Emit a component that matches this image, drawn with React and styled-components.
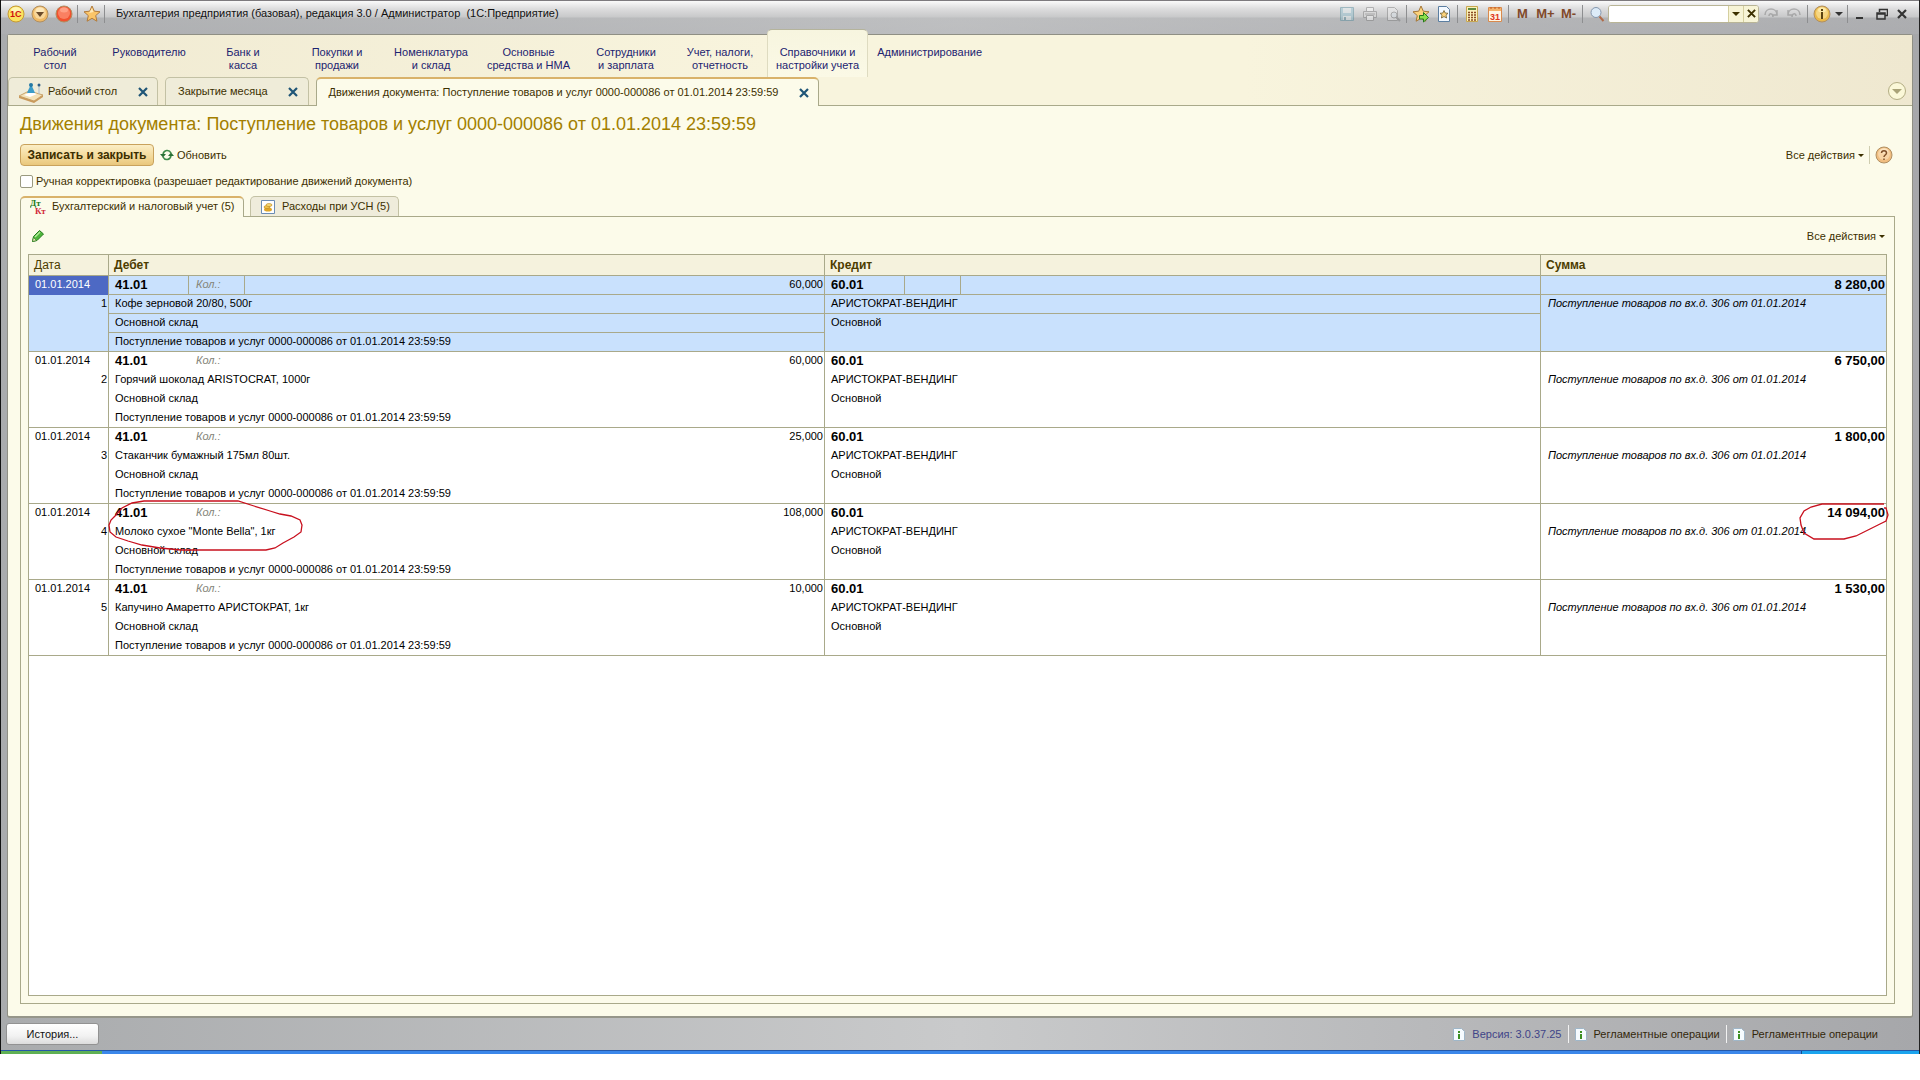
import React, { useState } from 'react';
import styled, { createGlobalStyle, css } from 'styled-components';

const line = '#a9a98a';
const cream = '#fcfbea';
const band = 'linear-gradient(90deg, #f0ead2, #f8f4dd 40%, #f8f4dd 65%, #efe8d0)';

const GlobalStyle = createGlobalStyle`
  * {
    box-sizing: border-box;
  }

  body {
    margin: 0;
    background: #fff;
    font-family: 'Liberation Sans', Arial, sans-serif;
    font-size: 11px;
    line-height: 13px;
    color: #3c3000;
  }

  button, input {
    font: inherit;
    color: inherit;
  }

  svg {
    display: block;
    flex: none;
  }
`;

const Window = styled.div`
  display: flex;
  flex-direction: column;
  height: calc(100vh - 26px);
  border-left: 1px solid #111;
  border-right: 1px solid #222;
  background: linear-gradient(90deg, #a9abad, #c9cacb 50%, #a6a7aa);
`;

const TitleBar = styled.header`
  display: flex;
  align-items: center;
  flex: none;
  height: 34px;
  padding: 0 8px 8px 6px;
  border-top: 1px solid #7d7a7e;
  background: linear-gradient(180deg, #fafafa 0, #dcdcdd 8px, #c8c9ca 16px, rgba(180, 181, 183, 0.5) 17px, rgba(176, 177, 180, 0.5) 100%);
`;

const ToolButton = styled.button`
  display: flex;
  align-items: center;
  justify-content: center;
  width: ${p => p.$width || 23}px;
  height: 22px;
  padding: 0;
  border: 0;
  background: none;
  color: #80492a;
  font-size: 13px;
  font-weight: bold;
  opacity: ${p => (p.disabled ? 0.45 : 1)};
`;

const Separator = styled.i`
  flex: none;
  width: 1px;
  height: 18px;
  margin: 0 ${p => p.$gap || 0}px;
  background: ${p => p.$color || '#8d8e90'};
`;

const WindowTitle = styled.h1`
  flex: 1;
  margin: 0 0 0 9px;
  font-size: 11px;
  font-weight: normal;
  color: #111;
  white-space: pre;
`;

const SearchBox = styled.div`
  display: flex;
  width: 151px;
  height: 18px;
  border: 1px solid #b9b596;
  border-radius: 3px;
  background: #fff;
  overflow: hidden;

  input {
    flex: 1;
    min-width: 0;
    padding: 0 4px;
    border: 0;
    outline: none;
  }

  button {
    display: flex;
    align-items: center;
    justify-content: center;
    width: 15px;
    padding: 0;
    border: 0;
    border-left: 1px solid #d5cf9f;
    background: #f7f4d6;
  }
`;

const Client = styled.div`
  display: flex;
  flex-direction: column;
  flex: 1;
  min-height: 0;
  margin: 0 6px;
  border: 1px solid #8f8f84;
  border-bottom: 2px solid #96968a;
  border-radius: 3px;
  background: ${cream};
`;

const Sections = styled.nav`
  display: flex;
  flex: none;
  height: 42px;
  background: ${band};
`;

const Section = styled.a`
  min-width: 94px;
  height: 48px;
  margin-top: -6px;
  padding: 16px 8px 0;
  border: 1px solid transparent;
  border-bottom: 0;
  text-align: center;
  text-decoration: none;
  white-space: pre-line;
  color: #1c2370;

  ${p => p.$active && css`
    border-color: #b5b49c #dedbc0 transparent;
    border-radius: 5px 5px 0 0;
    background: linear-gradient(180deg, #f7f5df, #fbf9e6);
  `}
`;

const PageTabs = styled.div`
  display: flex;
  align-items: flex-end;
  flex: none;
  height: 29px;
  padding-right: 5px;
  gap: 7px;
  border-bottom: 1px solid ${line};
  background: ${band};
`;

const PageTab = styled.div`
  display: flex;
  align-items: center;
  height: 28px;
  padding: 0 7px 0 12px;
  border: 1px solid #c3c1a4;
  border-bottom: 0;
  border-radius: 5px 5px 0 0;
  background: #efecd9;
  white-space: nowrap;

  ${p => p.$active && css`
    height: 29px;
    margin-bottom: -1px;
    border-color: ${line};
    border-top: 2px solid #d9b26a;
    background: ${cream};
  `}

  ${p => p.$icon && css`
    padding-left: 9px;
    gap: 4px;
  `}

  button {
    display: flex;
    align-items: center;
    justify-content: center;
    width: 15px;
    height: 15px;
    margin-left: ${p => (p.$icon ? 14 : 18)}px;
    padding: 0;
    border: 0;
    background: none;
  }
`;

const CollapseButton = styled.button`
  width: 20px;
  height: 20px;
  margin: 0 0 4px auto;
  padding: 0;
  border: 0;
  background: none;
`;

const Page = styled.main`
  display: flex;
  flex-direction: column;
  flex: 1;
  min-height: 0;
  padding: 8px 17px 12px 12px;
`;

const Heading = styled.h2`
  margin: 0 0 10px;
  font-size: 18px;
  line-height: 20px;
  font-weight: normal;
  color: #a37f00;
`;

const CommandBar = styled.div`
  display: flex;
  align-items: center;
  height: 22px;
  padding-right: 2px;
`;

const MainButton = styled.button`
  width: 134px;
  height: 22px;
  margin-right: 6px;
  padding: 0;
  border: 1px solid #c9a25c;
  border-radius: 4px;
  background: linear-gradient(180deg, #fbeec6, #f3d999 60%, #e9c77c);
  font-size: 12px;
  font-weight: bold;
  white-space: nowrap;
  color: #3c2e00;
`;

const CommandLink = styled.button`
  display: flex;
  align-items: center;
  gap: 3px;
  padding: 0;
  border: 0;
  background: none;
  white-space: nowrap;
`;

const Spacer = styled.div`
  flex: 1;
`;

const ManualEdit = styled.label`
  display: flex;
  align-items: center;
  align-self: flex-start;
  gap: 3px;
  height: 13px;
  margin: 9px 0 8px;

  input {
    appearance: none;
    width: 13px;
    height: 13px;
    margin: 0;
    border: 1px solid #9a9a80;
    border-radius: 2px;
    background: #fff;
  }
`;

const RegisterTabs = styled.div`
  display: flex;
  gap: 6px;
  height: 20px;
`;

const RegisterTab = styled.button`
  display: flex;
  align-items: center;
  gap: 6px;
  width: ${p => p.$width}px;
  height: 20px;
  padding: 0 9px;
  border: 1px solid #c3c1a4;
  border-bottom: 0;
  border-radius: 5px 5px 0 0;
  background: #efecdb;
  white-space: nowrap;

  ${p => p.$active && css`
    position: relative;
    height: 21px;
    border-color: ${line};
    border-top: 2px solid #d9b26a;
    padding-bottom: 2px;
    background: ${cream};
  `}
`;

const RegisterPanel = styled.section`
  display: flex;
  flex-direction: column;
  flex: 1;
  min-height: 0;
  padding: 7px;
  border: 1px solid ${line};

  ${CommandBar} {
    height: 30px;
    padding: 0 2px 6px 3px;
  }
`;

const GridFrame = styled.div`
  position: relative;
  flex: 1;
  min-height: 0;
  border: 1px solid ${line};
  background: #fff;
`;

const Grid = styled.table`
  width: 100%;
  table-layout: fixed;
  border-collapse: separate;
  border-spacing: 0;
  color: #000;

  th {
    height: 21px;
    padding: 0 5px;
    border-right: 1px solid ${line};
    border-bottom: 1px solid ${line};
    background: #f5f2dd;
    font-size: 12px;
    text-align: left;
    color: #4c3c00;
  }

  th:first-child {
    font-weight: normal;
  }

  th:last-child {
    border-right: 0;
  }
`;

const Entry = styled.tbody`
  background: ${p => (p.$selected ? '#c9e1fd' : '#fff')};

  td {
    border-color: ${p => (p.$selected ? line : 'transparent')};
    border-bottom-width: ${p => (p.$selected ? 1 : 0)}px;
  }
`;

const Cell = styled.td`
  height: 19px;
  padding: 0 1px 0 6px;
  border: 0 solid;
  line-height: 17px;
  vertical-align: top;
  white-space: nowrap;
  text-align: ${p => (p.$right ? 'right' : 'left')};

  ${p => p.$split && css`
    border-right-width: 1px;
  `}

  ${p => p.$edge && css`
    && {
      border-right: 1px solid ${line};
    }
  `}

  ${p => p.$last && css`
    && {
      border-bottom: 1px solid ${line};
    }
  `}
`;

const DateCell = styled(Cell)`
  ${p => p.$current && css`
    && {
      border-bottom: 0;
    }

    background: #4d69c4;
    color: #fff;
  `}
`;

const AccountCell = styled(Cell)`
  font-size: 13px;
  font-weight: bold;
`;

const QuantityLabel = styled(Cell)`
  padding-left: 7px;
  font-style: italic;
  color: #85857a;
`;

const NoteCell = styled(Cell)`
  padding-left: 7px;
  font-style: italic;
`;

const PenMark = styled.svg`
  position: absolute;
  top: ${p => p.$top}px;
  left: ${p => p.$left};
  right: ${p => p.$right};
  fill: none;
  stroke: #c8101e;
  stroke-width: 1.3;
  pointer-events: none;
`;

const StatusBar = styled.footer`
  display: flex;
  align-items: center;
  flex: none;
  height: 32px;
  padding: 0 41px 0 5px;
`;

const HistoryButton = styled.button`
  width: 93px;
  height: 22px;
  padding: 0;
  border: 1px solid #929292;
  border-radius: 3px;
  background: linear-gradient(180deg, #fff, #f2f2f2 60%, #dcdcdc);
  color: #111;
`;

const StatusItem = styled.span`
  display: flex;
  align-items: center;
  gap: 7px;
  color: ${p => (p.$accent ? '#3f4488' : '#33270a')};
`;

const TaskBar = styled.div`
  display: flex;
  flex: none;
  height: 4px;
  background: #3b87ea;
  border-top: 1px solid #2458a8;

  &::before {
    content: '';
    width: 101px;
    background: #5fb054;
  }

  &::after {
    content: '';
    width: 117px;
    margin-left: auto;
    border-left: 1px solid #14508f;
    background: #1ba4ee;
  }
`;

const Caret = ({ color = '#3c3000', size = 6 }) => (
  <svg width={size} height={size / 2} viewBox="0 0 6 3"><path d="M0 0h6L3 3z" fill={color} /></svg>
);

const Cross = ({ color = '#1f5577', size = 10 }) => (
  <svg width={size} height={size} viewBox="0 0 10 10">
    <path d="M1 1l8 8M9 1L1 9" stroke={color} strokeWidth="2.2" />
  </svg>
);

const Logo = () => (
  <svg width="18" height="18" viewBox="0 0 18 18">
    <circle cx="9" cy="9" r="8" fill="#fbe25e" stroke="#c59a33" />
    <ellipse cx="9" cy="5" rx="5" ry="3" fill="#fff6b0" />
    <text x="3" y="12" fontSize="9" fontWeight="bold" fontFamily="Liberation Sans" fill="#d01010">1С</text>
  </svg>
);

const Ball = ({ light, dark, children }) => (
  <svg width="18" height="18" viewBox="0 0 18 18">
    <circle cx="9" cy="9" r="8" fill={dark} stroke="#b08f62" />
    <circle cx="9" cy="8" r="6" fill={light} opacity="0.6" />
    <ellipse cx="9" cy="5" rx="4" ry="2.5" fill={light} />
    {children}
  </svg>
);

const starPath = 'M9 1l2.3 5.2 5.7.6-4.3 3.8 1.2 5.6L9 13.3 4.1 16.2l1.2-5.6L1 6.8l5.7-.6z';

const Star = () => (
  <svg width="18" height="18" viewBox="0 0 18 18">
    <path d={starPath} fill="#fbc568" stroke="#b17b3c" />
    <path d="M9 3l1.5 4L6 8z" fill="#ffe9b8" />
  </svg>
);

const Floppy = () => (
  <svg width="16" height="16" viewBox="0 0 16 16">
    <path d="M1.5 1.5h13v13h-13z" fill="#8fc0d0" stroke="#4f8798" />
    <path d="M4 2h8v5H4zM4 10h8v4H4z" fill="#e2eef0" />
    <path d="M5 11h2v3H5z" fill="#4f8798" />
  </svg>
);

const Printer = () => (
  <svg width="16" height="16" viewBox="0 0 16 16" stroke="#777" fill="#ddd">
    <path d="M4.5 1.5h7v4h-7z" fill="#fff" />
    <path d="M1.5 5.5h13v6h-13z" />
    <path d="M4.5 9.5h7v5h-7z" fill="#fff" />
    <path d="M3 8h10" />
  </svg>
);

const Preview = () => (
  <svg width="16" height="16" viewBox="0 0 16 16" stroke="#777" fill="none">
    <path d="M2.5 1.5h7l3 3v10h-10z" fill="#eee" />
    <circle cx="9" cy="9" r="3" fill="#dde6ee" />
    <path d="M11 11l4 4" strokeWidth="2" />
  </svg>
);

const StarAdd = () => (
  <svg width="18" height="18" viewBox="0 0 18 18">
    <path d={starPath} fill="#fbd27c" stroke="#a57738" />
    <path d="M7.5 10.5h4v-3l5 5-5 4.5v-3h-4z" fill="#8de04c" stroke="#257a1c" />
  </svg>
);

const StarPage = () => (
  <svg width="14" height="16" viewBox="0 0 14 16">
    <path d="M1.5.5h8l3 3v12h-11z" fill="#f4f9ff" stroke="#5b7ea1" />
    <path d="M7 4.5l1.2 2.5 2.8.3-2 1.9.6 2.8L7 10.6 4.4 12l.6-2.8-2-1.9 2.8-.3z" fill="#fbd27c" stroke="#6d5b2b" strokeWidth=".8" />
  </svg>
);

const Calculator = () => (
  <svg width="14" height="16" viewBox="0 0 14 16">
    <path d="M1.5.5h11v15h-11z" fill="#fbf2ba" stroke="#c8a850" />
    <path d="M3 2h8v2H3z" fill="#5f8b40" />
    <path d="M3 6.5h8M3 9h8M3 11.5h8M3 14h8" stroke="#8a4a22" strokeWidth="1.5" strokeDasharray="2 1" />
  </svg>
);

const Calendar = () => (
  <svg width="14" height="16" viewBox="0 0 14 16">
    <path d="M.5 1.5h13v14H.5z" fill="#fff6e4" stroke="#d98a4e" />
    <path d="M1 2h12v3H1z" fill="#f4b26a" />
    <path d="M3 1v2M7 1v2M11 1v2" stroke="#c2571b" />
    <text x="2" y="14" fontSize="9" fontWeight="bold" fontFamily="Liberation Sans" fill="#e0361a">31</text>
  </svg>
);

const Magnifier = () => (
  <svg width="16" height="16" viewBox="0 0 16 16">
    <circle cx="7" cy="6.5" r="5" fill="#dcebf8" stroke="#8597ae" />
    <path d="M10.5 10.5l4 4.5" stroke="#b06a48" strokeWidth="2" />
  </svg>
);

const Turn = ({ back }) => (
  <svg width="16" height="14" viewBox="0 0 16 14" fill="none" stroke="#777" strokeWidth="1.5">
    {back
      ? <path d="M2 8C2 0 14 0 14 8M2 3v5h5M6 10c0-4 4-4 4-1" />
      : <path d="M14 8C14 0 2 0 2 8M14 3v5H9M10 10c0-4-4-4-4-1" />}
  </svg>
);

const DeskIcon = () => (
  <svg width="26" height="22" viewBox="0 0 26 22">
    <path d="M1 15l10-5 14 4-9 6z" fill="#f4e2b8" stroke="#c9a46c" />
    <path d="M1 15v2l15 5 9-6v-2l-9 6z" fill="#c99a5c" />
    <path d="M6 14l7-3 6 2-7 3z" fill="#fff" />
    <path d="M13 3l4 9H9z" fill="#3a9cc9" />
    <circle cx="13" cy="4" r="2" fill="#2479a5" />
    <path d="M21 4v9" stroke="#a9bccb" strokeWidth="1" />
    <circle cx="21" cy="4" r="1.5" fill="#2f5f88" />
  </svg>
);

const Refresh = () => (
  <svg width="14" height="12" viewBox="0 0 14 12">
    <path d="M3 5c1-4 6-5 8-1M11 7c-1 4-6 5-8 1" fill="none" stroke="#3d8a48" strokeWidth="1.6" />
    <path d="M0 5h6L3 8.5zM8 7h6l-3-3.5z" fill="#2a7036" />
  </svg>
);

const DtKt = () => (
  <svg width="16" height="16" viewBox="0 0 16 16" fontFamily="Liberation Serif" fontWeight="bold" fontSize="9">
    <text x="0" y="7" fill="#1c7a1c">Дт</text>
    <text x="5" y="15" fill="#d22a3a">Кт</text>
  </svg>
);

const CoinsPage = () => (
  <svg width="16" height="14" viewBox="0 0 16 14">
    <path d="M1.5.5h13v13h-13z" fill="#fff" stroke="#6b8cb4" />
    <ellipse cx="8" cy="9.5" rx="4" ry="2" fill="#e0a526" />
    <ellipse cx="7" cy="7" rx="3" ry="1.5" fill="#f2c64e" stroke="#b98419" strokeWidth=".6" />
    <ellipse cx="9" cy="5" rx="3" ry="1.5" fill="#f8d873" stroke="#b98419" strokeWidth=".6" />
  </svg>
);

const Pencil = () => (
  <svg width="14" height="14" viewBox="0 0 14 14">
    <path d="M1.5 12.5l1-5 6-6 4 3.5L6 11.5z" fill="#4fb63c" stroke="#237a1b" />
    <path d="M4 8l5-5" stroke="#b4ec9b" strokeWidth="1.5" />
    <path d="M1.5 12.5l1-4 3 3z" fill="#f3e6bb" stroke="#237a1b" strokeWidth=".6" />
  </svg>
);

const InfoPage = () => (
  <svg width="12" height="13" viewBox="0 0 12 13">
    <path d="M.5.5h8l3 3v9H.5z" fill="#f6fbff" stroke="#9fb6c8" />
    <path d="M5 3h2v2H5zM5 6h2v5H5z" fill="#3d8f22" />
  </svg>
);

const sections = [
  'Рабочий\nстол',
  'Руководителю',
  'Банк и\nкасса',
  'Покупки и\nпродажи',
  'Номенклатура\nи склад',
  'Основные\nсредства и НМА',
  'Сотрудники\nи зарплата',
  'Учет, налоги,\nотчетность',
  'Справочники и\nнастройки учета',
  'Администрирование',
];

const documentName = 'Поступление товаров и услуг 0000-000086 от 01.01.2014 23:59:59';

const entries = [
  { id: 1, item: 'Кофе зерновой 20/80, 500г', quantity: '60,000', sum: '8 280,00' },
  { id: 2, item: 'Горячий шоколад ARISTOCRAT, 1000г', quantity: '60,000', sum: '6 750,00' },
  { id: 3, item: 'Стаканчик бумажный 175мл 80шт.', quantity: '25,000', sum: '1 800,00' },
  { id: 4, item: 'Молоко сухое "Monte Bella", 1кг', quantity: '108,000', sum: '14 094,00' },
  { id: 5, item: 'Капучино Амаретто АРИСТОКРАТ, 1кг', quantity: '10,000', sum: '1 530,00' },
];

const EntryRows = ({ entry, selected, onSelect }) => (
  <Entry $selected={selected} onClick={onSelect}>
    <tr>
      <DateCell $edge $current={selected}>01.01.2014</DateCell>
      <AccountCell $split>41.01</AccountCell>
      <QuantityLabel $split>Кол.:</QuantityLabel>
      <Cell $right $edge>{entry.quantity}</Cell>
      <AccountCell $split>60.01</AccountCell>
      <Cell $split />
      <Cell $edge />
      <AccountCell $right>{entry.sum}</AccountCell>
    </tr>
    <tr>
      <Cell $right $edge $last rowSpan={3}>{entry.id}</Cell>
      <Cell $edge colSpan={3}>{entry.item}</Cell>
      <Cell $edge colSpan={3}>АРИСТОКРАТ-ВЕНДИНГ</Cell>
      <NoteCell $last rowSpan={3}>Поступление товаров по вх.д. 306 от 01.01.2014</NoteCell>
    </tr>
    <tr>
      <Cell $edge colSpan={3}>Основной склад</Cell>
      <Cell $edge $last colSpan={3} rowSpan={2}>Основной</Cell>
    </tr>
    <tr>
      <Cell $edge $last colSpan={3}>{documentName}</Cell>
    </tr>
  </Entry>
);

const Columns = styled.colgroup`
  col:nth-child(1), col:nth-child(2), col:nth-child(5) {
    width: 80px;
  }

  col:nth-child(3), col:nth-child(6) {
    width: 56px;
  }

  col:nth-child(8) {
    width: 345px;
  }
`;

const EntriesGrid = () => {
  const [current, setCurrent] = useState(1);

  return (
    <GridFrame>
      <Grid>
        <Columns>
          <col /><col /><col /><col /><col /><col /><col /><col />
        </Columns>
        <thead>
          <tr>
            <th>Дата</th>
            <th colSpan={3}>Дебет</th>
            <th colSpan={3}>Кредит</th>
            <th>Сумма</th>
          </tr>
        </thead>
        {entries.map(entry => (
          <EntryRows
            key={entry.id}
            entry={entry}
            selected={entry.id === current}
            onSelect={() => setCurrent(entry.id)}
          />
        ))}
      </Grid>
      <PenMark $top={245} $left="79px" width="198" height="52" viewBox="0 0 198 52">
        <path d="M7 16L14 8 24 3 36 1H130L146 6 162 11 172 14 183 16 192 20 194 25 193 32 186 37 175 43 167 48 158 50H73L52 48 34 45 20 41 8 37 2 32 1 25 3 20z" />
      </PenMark>
      <PenMark $top={248} $right="-4px" width="92" height="38" viewBox="0 0 92 38">
        <path d="M86 1H24L13 4 6 8 2 15 3 22 6 30 16 36H46L58 33 72 26 82 21 88 18 90 12 88 5 86 5" />
      </PenMark>
    </GridFrame>
  );
};

const App = () => (
  <>
    <GlobalStyle />
    <Window>
      <TitleBar>
        <ToolButton $width={18} aria-label="Главное меню"><Logo /></ToolButton>
        <ToolButton $width={30} aria-label="Меню функций">
          <Ball light="#fde9bc" dark="#efb965"><path d="M5 7h8l-4 5z" fill="#6b4a2a" /></Ball>
        </ToolButton>
        <ToolButton $width={18} aria-label="Остановить"><Ball light="#ffa085" dark="#f2512e" /></ToolButton>
        <Separator $gap={4} />
        <ToolButton $width={20} aria-label="Избранное"><Star /></ToolButton>
        <Separator $gap={2} />
        <WindowTitle>Бухгалтерия предприятия (базовая), редакция 3.0 / Администратор  (1С:Предприятие)</WindowTitle>
        <ToolButton disabled aria-label="Сохранить"><Floppy /></ToolButton>
        <ToolButton disabled aria-label="Печать"><Printer /></ToolButton>
        <ToolButton disabled aria-label="Просмотр"><Preview /></ToolButton>
        <Separator $gap={2} />
        <ToolButton aria-label="Добавить в избранное"><StarAdd /></ToolButton>
        <ToolButton aria-label="Перейти по ссылке"><StarPage /></ToolButton>
        <Separator $gap={2} />
        <ToolButton aria-label="Калькулятор"><Calculator /></ToolButton>
        <ToolButton aria-label="Календарь"><Calendar /></ToolButton>
        <Separator $gap={2} />
        <ToolButton>M</ToolButton>
        <ToolButton>M+</ToolButton>
        <ToolButton>M-</ToolButton>
        <Separator $gap={2} />
        <ToolButton aria-label="Найти"><Magnifier /></ToolButton>
        <SearchBox>
          <input type="text" aria-label="Поиск" />
          <button aria-label="Выбрать"><Caret size={8} /></button>
          <button aria-label="Очистить"><Cross color="#3c3000" size={9} /></button>
        </SearchBox>
        <ToolButton disabled aria-label="Вперед"><Turn /></ToolButton>
        <ToolButton disabled aria-label="Назад"><Turn back /></ToolButton>
        <Separator $gap={2} />
        <ToolButton aria-label="О программе">
          <Ball light="#fdeaa8" dark="#eab94a"><path d="M8 4h2v2H8zM8 7h2v7H8z" fill="#5a4312" /></Ball>
        </ToolButton>
        <ToolButton $width={12} aria-label="Сервис"><Caret color="#333" size={8} /></ToolButton>
        <Separator $gap={2} />
        <ToolButton $width={20} aria-label="Свернуть">
          <svg width="10" height="12" viewBox="0 0 10 12"><path d="M1 9h7v2H1z" fill="#333" /></svg>
        </ToolButton>
        <ToolButton aria-label="Восстановить">
          <svg width="12" height="12" viewBox="0 0 12 12" fill="none" stroke="#333" strokeWidth="1.5">
            <path d="M3.5 4V1.5h8v6H9M1 5h8v6H1zM1 6h8" />
          </svg>
        </ToolButton>
        <ToolButton $width={18} aria-label="Закрыть"><Cross color="#333" /></ToolButton>
      </TitleBar>

      <Client>
        <Sections>
          {sections.map(name => (
            <Section key={name} href="#" $active={name.startsWith('Справочники')}>{name}</Section>
          ))}
        </Sections>
        <PageTabs>
          <PageTab $icon>
            <DeskIcon />
            Рабочий стол
            <button aria-label="Закрыть вкладку"><Cross /></button>
          </PageTab>
          <PageTab>
            Закрытие месяца
            <button aria-label="Закрыть вкладку"><Cross /></button>
          </PageTab>
          <PageTab $active>
            Движения документа: {documentName}
            <button aria-label="Закрыть вкладку"><Cross /></button>
          </PageTab>
          <CollapseButton aria-label="Свернуть панель">
            <svg width="20" height="20" viewBox="0 0 20 20">
              <circle cx="10" cy="10" r="8.5" fill="#fbf8d8" stroke="#b3ad83" />
              <path d="M5 8h10l-5 5z" fill="#aaa378" />
            </svg>
          </CollapseButton>
        </PageTabs>

        <Page>
          <Heading>Движения документа: {documentName}</Heading>
          <CommandBar>
            <MainButton>Записать и закрыть</MainButton>
            <CommandLink><Refresh />Обновить</CommandLink>
            <Spacer />
            <CommandLink>Все действия <Caret /></CommandLink>
            <Separator $gap={5} $color="#cfcdb0" />
            <ToolButton $width={18} aria-label="Справка">
              <Ball light="#fde5c2" dark="#f0bd80">
                <path d="M6.5 7c0-3 5-3 5 0 0 2-2.5 2-2.5 4M9 12.5v1.5" fill="none" stroke="#80502a" strokeWidth="1.5" />
              </Ball>
            </ToolButton>
          </CommandBar>
          <ManualEdit>
            <input type="checkbox" />
            Ручная корректировка (разрешает редактирование движений документа)
          </ManualEdit>
          <RegisterTabs>
            <RegisterTab $active $width={224}><DtKt />Бухгалтерский и налоговый учет (5)</RegisterTab>
            <RegisterTab $width={149}><CoinsPage />Расходы при УСН (5)</RegisterTab>
          </RegisterTabs>
          <RegisterPanel>
            <CommandBar>
              <CommandLink aria-label="Изменить"><Pencil /></CommandLink>
              <Spacer />
              <CommandLink>Все действия <Caret /></CommandLink>
            </CommandBar>
            <EntriesGrid />
          </RegisterPanel>
        </Page>
      </Client>

      <StatusBar>
        <HistoryButton>История...</HistoryButton>
        <Spacer />
        <StatusItem $accent><InfoPage />Версия: 3.0.37.25</StatusItem>
        <Separator $gap={6} $color="#f2f2f2" />
        <StatusItem><InfoPage />Регламентные операции</StatusItem>
        <Separator $gap={6} $color="#f2f2f2" />
        <StatusItem><InfoPage />Регламентные операции</StatusItem>
      </StatusBar>
      <TaskBar />
    </Window>
  </>
);

export default App;
